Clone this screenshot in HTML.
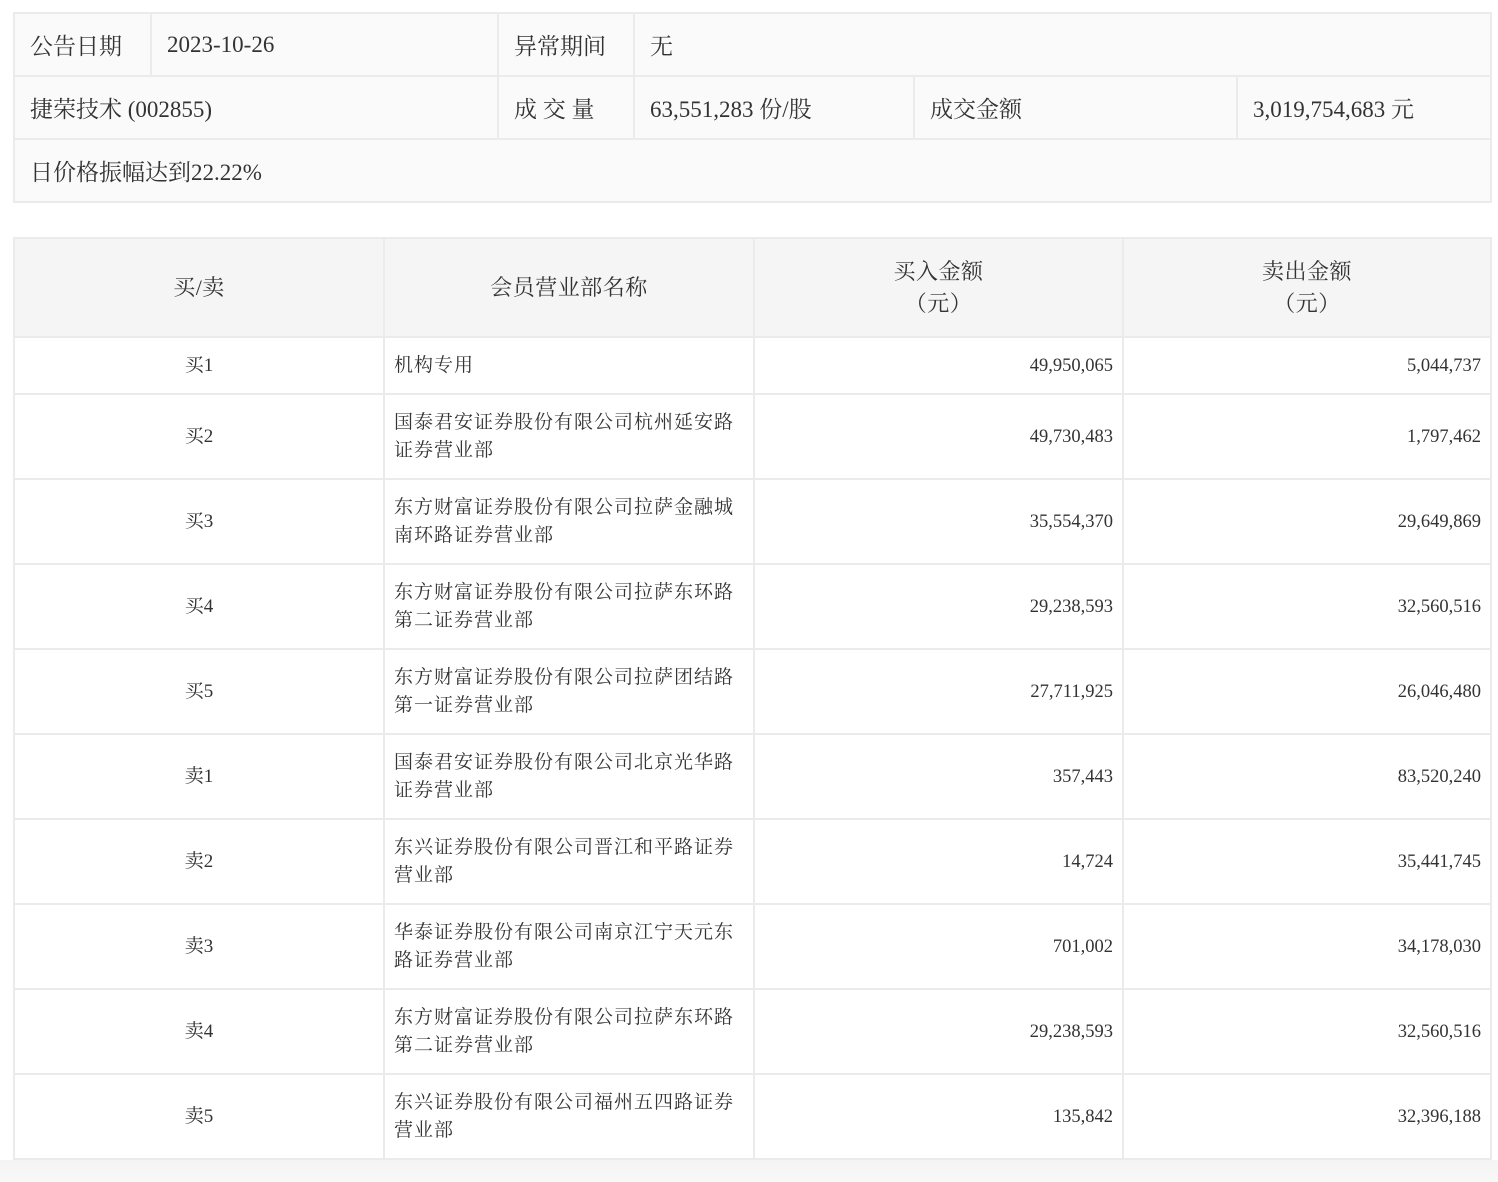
<!DOCTYPE html>
<html><head><meta charset="utf-8"><style>
body{margin:0;background:#fff;width:1498px;height:1182px;position:relative;font-family:"Liberation Serif","Noto Serif CJK SC",serif;color:#333;}
table{border-collapse:collapse;position:absolute;left:13px;table-layout:fixed;}
td,th{border:2px solid #ebebeb;padding:0;font-weight:normal;}
#t1{top:12px;width:1477px;background:#fafafa;font-size:23px;}
#t1 tr{height:63px}
#t1 td{padding-left:15px;}
#t2{top:237px;width:1477px;font-size:19px;}
#t2 th{background:#f5f5f5;font-size:22px;line-height:32px;letter-spacing:0.5px}
#t2 tr.h{height:99px}
#t2 tr{height:85px}
#t2 tr.r1{height:57px}
#t2 td{line-height:28px;}
#t2 td.c{text-align:center}
#t2 td.n{text-align:right;padding-right:9px;font-size:18.5px}
#t2 td.m{padding-left:9px;letter-spacing:1px}
.foot{position:absolute;left:0;top:1160px;width:1498px;height:22px;background:linear-gradient(#f4f4f4,#f8f8f8)}
</style></head><body>
<table id="t1">
<colgroup><col style="width:137px"><col style="width:347px"><col style="width:136px"><col style="width:280px"><col style="width:323px"><col style="width:254px"></colgroup>
<tr><td>公告日期</td><td>2023-10-26</td><td>异常期间</td><td colspan="3">无</td></tr>
<tr><td colspan="2">捷荣技术 (002855)</td><td>成 交 量</td><td>63,551,283 份/股</td><td>成交金额</td><td>3,019,754,683 元</td></tr>
<tr><td colspan="6">日价格振幅达到22.22%</td></tr>
</table>
<table id="t2">
<colgroup><col style="width:370px"><col style="width:370px"><col style="width:369px"><col style="width:368px"></colgroup>
<tr class="h"><th>买/卖</th><th>会员营业部名称</th><th>买入金额<br>（元）</th><th>卖出金额<br>（元）</th></tr>
<tr class="r1"><td class="c">买1</td><td class="m">机构专用</td><td class="n">49,950,065</td><td class="n">5,044,737</td></tr>
<tr><td class="c">买2</td><td class="m">国泰君安证券股份有限公司杭州延安路<br>证券营业部</td><td class="n">49,730,483</td><td class="n">1,797,462</td></tr>
<tr><td class="c">买3</td><td class="m">东方财富证券股份有限公司拉萨金融城<br>南环路证券营业部</td><td class="n">35,554,370</td><td class="n">29,649,869</td></tr>
<tr><td class="c">买4</td><td class="m">东方财富证券股份有限公司拉萨东环路<br>第二证券营业部</td><td class="n">29,238,593</td><td class="n">32,560,516</td></tr>
<tr><td class="c">买5</td><td class="m">东方财富证券股份有限公司拉萨团结路<br>第一证券营业部</td><td class="n">27,711,925</td><td class="n">26,046,480</td></tr>
<tr><td class="c">卖1</td><td class="m">国泰君安证券股份有限公司北京光华路<br>证券营业部</td><td class="n">357,443</td><td class="n">83,520,240</td></tr>
<tr><td class="c">卖2</td><td class="m">东兴证券股份有限公司晋江和平路证券<br>营业部</td><td class="n">14,724</td><td class="n">35,441,745</td></tr>
<tr><td class="c">卖3</td><td class="m">华泰证券股份有限公司南京江宁天元东<br>路证券营业部</td><td class="n">701,002</td><td class="n">34,178,030</td></tr>
<tr><td class="c">卖4</td><td class="m">东方财富证券股份有限公司拉萨东环路<br>第二证券营业部</td><td class="n">29,238,593</td><td class="n">32,560,516</td></tr>
<tr><td class="c">卖5</td><td class="m">东兴证券股份有限公司福州五四路证券<br>营业部</td><td class="n">135,842</td><td class="n">32,396,188</td></tr>
</table>
<div class="foot"></div>
</body></html>
